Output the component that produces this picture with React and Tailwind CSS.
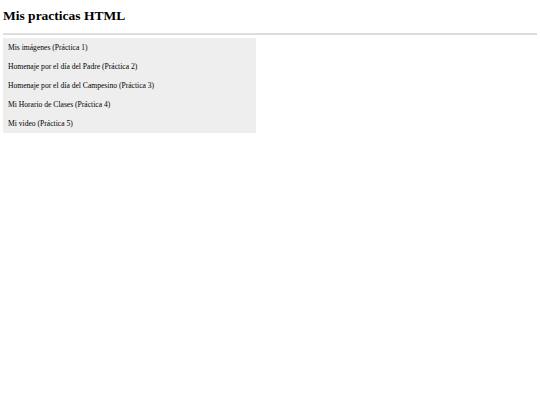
export default function App() {
  const items = [
    "Mis imágenes (Práctica 1)",
    "Homenaje por el día del Padre (Práctica 2)",
    "Homenaje por el día del Campesino (Práctica 3)",
    "Mi Horario de Clases (Práctica 4)",
    "Mi video (Práctica 5)",
  ];
  return (
    <div className="bg-white w-[540px] h-[405px] px-[3px] pt-[7px] text-black" style={{ fontFamily: '"Liberation Serif", serif' }}>
      <h1 className="text-[13.5px] font-bold leading-[18px]">Mis practicas HTML</h1>
      <div className="mt-[8px] h-[2px] w-[534px] bg-[#dddddd]"></div>
      <ul className="mt-[3px] w-[253px] bg-[#eeeeee]">
        {items.map((t) => (
          <li key={t} className="px-[5px] h-[19px] flex items-center text-[7.6px]">{t}</li>
        ))}
      </ul>
    </div>
  );
}
